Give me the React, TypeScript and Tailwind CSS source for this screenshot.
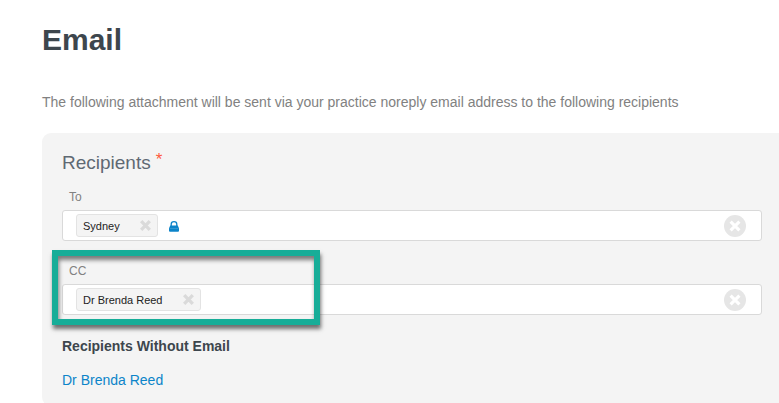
import { ReactNode } from "react";

type RecipientFieldProps = {
    label: string
    name: string
    locked?: boolean
}

function CrossIcon({ className }: { className: string }): ReactNode {
    return (
        <svg viewBox="0 0 11 11" className={className} fill="none" stroke="currentColor" strokeWidth="3.3">
            <path d="M1.2 1.2L9.8 9.8M9.8 1.2L1.2 9.8" />
        </svg>
    )
}

function ClearIcon(): ReactNode {
    return (
        <svg viewBox="0 0 22 22" className="w-[22px] h-[22px]">
            <circle cx="11" cy="11" r="11" fill="#e6e6e6" />
            <path d="M6.6 6.6L15.4 15.4M15.4 6.6L6.6 15.4" fill="none" stroke="#fff" strokeWidth="3.1" />
        </svg>
    )
}

function LockIcon(): ReactNode {
    return (
        <svg viewBox="0 0 10 11" className="w-[10px] h-[11px] ml-[11px] mt-px">
            <path d="M2.2 5V3.3a2.8 2.6 0 0 1 5.6 0V5" fill="none" stroke="#0c84c9" strokeWidth="1.3" />
            <path d="M1.2 4.5h7.6L10 7.2v2.6a1 1 0 0 1-1 1H1a1 1 0 0 1-1-1V7.2z" fill="#0c84c9" />
            <path d="M1 7.5h8" stroke="#4ba5d8" strokeWidth="0.6" />
        </svg>
    )
}

function RecipientField({ label, name, locked }: RecipientFieldProps): ReactNode {
    return (
        <div>
            <label className="block pl-[7px] text-xs leading-4 text-[#818181]">{label}</label>
            <div className="mt-[5px] flex h-[31px] w-[700px] items-center justify-between rounded-[3px] border border-[#d9d9d9] bg-white pl-[13px] pr-[15px]">
                <div className="flex items-center">
                    <div className="flex h-[23px] items-center rounded-[3px] border border-[#e3e3e3] bg-[#f4f4f4] pl-1.5 pr-[6px]">
                        <span className="text-[11px] leading-4 text-[#222]">{name}</span>
                        <CrossIcon className="ml-5 w-[11px] h-[11px] text-[#dadada]" />
                    </div>
                    {locked && <LockIcon />}
                </div>
                <ClearIcon />
            </div>
        </div>
    )
}

export default function App(): ReactNode {
    return (
        <div className="h-[403px] overflow-hidden bg-white pl-[42px] font-['Liberation_Sans',Arial,sans-serif]">
            <h1 className="pt-[22px] text-[30px] leading-9 font-bold text-[#3d464d]">Email</h1>
            <p className="mt-[34px] text-sm leading-5 text-[#818181]">
                The following attachment will be sent via your practice noreply email address to the following recipients
            </p>
            <div className="mt-[21px] h-[273px] rounded-l-[9px] bg-[#f4f4f4] pl-5 pt-[18px]">
                <h2 className="flex text-[19px] leading-6 text-[#5f6973]">
                    Recipients
                    <span className="ml-[5px] -mt-[3px] text-[17px] leading-6 text-[#ff5a3c]">*</span>
                </h2>
                <div className="mt-[14px]">
                    <RecipientField label="To" name="Sydney" locked />
                </div>
                <div className="relative mt-[22px]">
                    <RecipientField label="CC" name="Dr Brenda Reed" />
                    <div className="absolute -left-[10px] -top-[13px] h-[75px] w-[268px] border-6 border-[#17ad98] shadow-[1px_4px_4px_rgba(0,0,0,0.55),inset_1px_4px_4px_rgba(0,0,0,0.5)]" />
                </div>
                <h3 className="mt-[21px] text-sm leading-5 font-bold text-[#3d464d]">Recipients Without Email</h3>
                <a className="mt-[14px] block text-sm leading-5 text-[#0c84c9]">Dr Brenda Reed</a>
            </div>
        </div>
    );
}
